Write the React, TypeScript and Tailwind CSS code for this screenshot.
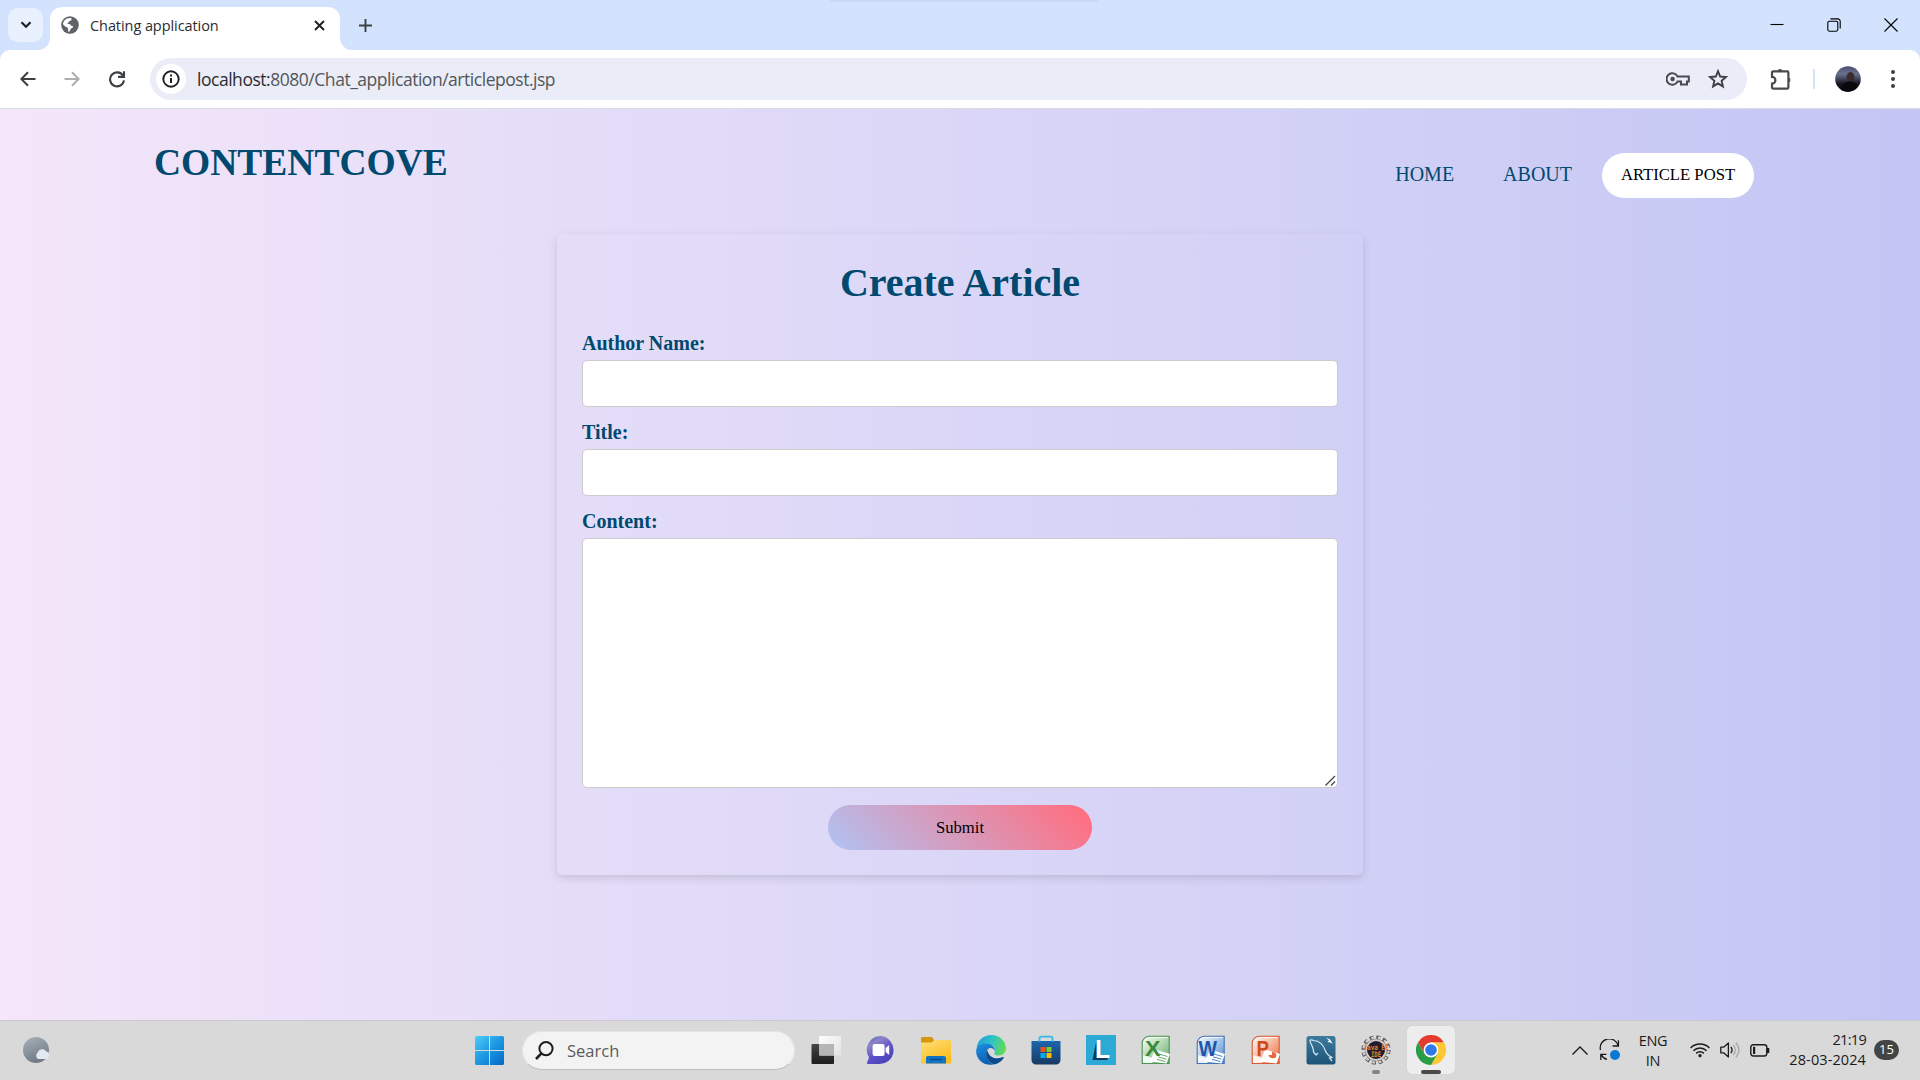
import React from "react";

const SEGOE = "font-['Open_Sans','Noto_Sans',sans-serif]";

function GlobeIcon() {
  return (
    <svg width="18" height="18" viewBox="0 0 18 18" className="shrink-0">
      <circle cx="9" cy="9" r="8.8" fill="#5f6368" />
      <path d="M2 8.2C2 4.8 5 2 8.6 1.9L10.6 2.3C10.8 4.6 9.6 5.2 7.9 5.4C7.6 6.8 6.6 7 5.6 7.4C7.6 7.6 9.6 7.6 9.8 9.6C11.6 9.8 12.4 10.2 12 11.6C10.6 11.8 10.4 13 9.4 13.2C9.2 14.8 8.6 15.6 7.4 16C7 14 7.4 12.6 6.4 11.6C4.8 11 3 9.6 2 8.2Z" fill="#fff" />
    </svg>
  );
}

function TabStrip() {
  return (
    <div className="relative flex h-[50px] items-stretch bg-[#d3e2fd]">
      <div className="absolute top-0 left-[830px] h-[2px] w-[268px] rounded-b bg-[#c9daf8]" />
      <button className="mt-2 ml-2 flex h-[34px] w-[35px] items-center justify-center rounded-[10px] bg-[#e9f1fe]">
        <svg width="12" height="8" viewBox="0 0 12 8" fill="none" stroke="#1f2023" strokeWidth="2.2">
          <path d="M1.5 1.2L6 5.8L10.5 1.2" />
        </svg>
      </button>
      <svg width="12" height="12" viewBox="0 0 12 12" className="-ml-[5px] self-end">
        <path d="M12 0V12H0A12 12 0 0 0 12 0Z" fill="#fff" />
      </svg>
      <div className="mt-[7px] flex w-[290px] items-center rounded-t-[12px] bg-white pr-[15px] pb-[7px] pl-[11px]">
        <GlobeIcon />
        <span className={`mt-px ml-[11px] text-[14.5px] tracking-[-0.07px] whitespace-nowrap text-[#2b2c2f] ${SEGOE}`}>Chating application</span>
        <svg width="11" height="11" viewBox="0 0 11 11" className="ml-auto" stroke="#1f2023" strokeWidth="1.9">
          <path d="M1 1L10 10M10 1L1 10" />
        </svg>
      </div>
      <svg width="12" height="12" viewBox="0 0 12 12" className="self-end">
        <path d="M0 0V12H12A12 12 0 0 1 0 0Z" fill="#fff" />
      </svg>
      <svg width="13" height="13" viewBox="0 0 13 13" className="mt-[18.5px] ml-[7px]" stroke="#3c4043" strokeWidth="1.9">
        <path d="M6.5 0V13M0 6.5H13" />
      </svg>
      <div className="mr-[22px] ml-auto flex items-center gap-[43px] text-black">
        <svg width="14" height="14" viewBox="0 0 14 14" stroke="currentColor" strokeWidth="1.1">
          <path d="M0.5 6.5H13.5" />
        </svg>
        <svg width="14" height="14" viewBox="0 0 14 14" fill="none" stroke="currentColor" strokeWidth="1.1">
          <rect x="0.8" y="3.2" width="10" height="10" rx="1.6" />
          <path d="M3.4 0.9H10.8A2.4 2.4 0 0 1 13.2 3.3V10.6" />
        </svg>
        <svg width="14" height="14" viewBox="0 0 14 14" stroke="currentColor" strokeWidth="1.1">
          <path d="M0.5 0.5L13.5 13.5M13.5 0.5L0.5 13.5" />
        </svg>
      </div>
    </div>
  );
}

function Toolbar() {
  return (
    <div className="bg-[#d3e2fd]">
      <div className="flex h-[59px] items-center rounded-t-[10px] border-b border-[#d9dce6] bg-white">
        <svg width="16" height="16" viewBox="0 0 16 16" className="ml-5" fill="none" stroke="#3c4043" strokeWidth="2">
          <path d="M15.5 8H1.5M8 1.2L1.4 8L8 14.8" />
        </svg>
        <svg width="16" height="16" viewBox="0 0 16 16" className="ml-[28px]" fill="none" stroke="#adafb1" strokeWidth="2">
          <path d="M0.5 8H14.5M8 1.2L14.6 8L8 14.8" />
        </svg>
        <svg width="18" height="18" viewBox="0 0 18 18" className="ml-[28px]" fill="none" stroke="#3c4043" strokeWidth="2.1">
          <path d="M15 5.6A7 7 0 1 0 16 10.4" />
          <path d="M16 1.2V6.9H10" />
        </svg>
        <div className="ml-[24px] flex h-[42px] w-[1597px] items-center rounded-full bg-[#eaedf7] pr-[19px] pl-[6px]">
          <div className="flex size-[30px] items-center justify-center rounded-full bg-white">
            <svg width="18" height="18" viewBox="0 0 18 18" fill="none" stroke="#1f2023">
              <circle cx="9" cy="9" r="7.7" strokeWidth="1.9" />
              <path d="M9 8V13" strokeWidth="2" />
              <path d="M9 4.6V6.5" strokeWidth="2" />
            </svg>
          </div>
          <span className={`ml-[11px] text-[17.5px] tracking-[-0.47px] whitespace-nowrap text-[#53565a] ${SEGOE}`}>
            <span className="text-[#2b2c2f]">localhost:</span>8080/Chat_application/articlepost.jsp
          </span>
          <svg width="24" height="14" viewBox="0 0 24 14" className="ml-auto" fill="none" stroke="#474a4e" strokeWidth="2">
            <path d="M11.6 4.6A5.8 5.8 0 1 0 11.6 9.4H15V12.4H21V9.4H22.8V4.6Z" />
            <circle cx="6.6" cy="7" r="2.2" fill="#474a4e" stroke="none" />
          </svg>
          <svg width="20" height="20" viewBox="0 0 20 20" className="ml-[18px]" fill="none" stroke="#3c4043" strokeWidth="1.9">
            <path d="M10 2.2L12.2 7.5L17.9 8L13.6 11.8L14.9 17.4L10 14.4L5.1 17.4L6.4 11.8L2.1 8L7.8 7.5Z" />
          </svg>
        </div>
        <svg width="22" height="22" viewBox="0 0 22 22" className="ml-[23px]" fill="none" stroke="#474a4e" strokeWidth="2.2">
          <path d="M2 4.4A1 1 0 0 1 3 3.4H17.4A1 1 0 0 1 18.4 4.4V19.6A1 1 0 0 1 17.4 20.6H3A1 1 0 0 1 2 19.6V15.6A3.2 3.2 0 0 0 2 8.8Z" />
          <path d="M7.6 3A2.6 2.6 0 0 1 12.6 3ZM18.6 9.4A2.6 2.6 0 0 1 18.6 14.4Z" fill="#474a4e" stroke="none" />
        </svg>
        <div className="ml-[21px] h-5 w-[2px] bg-[#d3e2fd]" />
        <svg width="26" height="26" viewBox="0 0 26 26" className="ml-[20px]">
          <defs>
            <linearGradient id="sky" x1="0" y1="0" x2="0" y2="1">
              <stop offset="0" stopColor="#4a5270" />
              <stop offset="0.3" stopColor="#69718f" />
              <stop offset="0.55" stopColor="#34384a" />
              <stop offset="0.7" stopColor="#12141a" />
              <stop offset="1" stopColor="#0b0c10" />
            </linearGradient>
          </defs>
          <circle cx="13" cy="13" r="12.8" fill="url(#sky)" />
          <ellipse cx="15.5" cy="11.5" rx="4" ry="5.5" fill="#3b2a2e" />
          <path d="M6 24C8 17 11 15.5 15.5 15.5C20 15.5 22 18 22.5 21A12.8 12.8 0 0 1 6 24Z" fill="#08090c" />
        </svg>
        <svg width="4" height="20" viewBox="0 0 4 20" className="ml-[30px]" fill="#3c4043">
          <circle cx="2" cy="3" r="2" />
          <circle cx="2" cy="10" r="2" />
          <circle cx="2" cy="17" r="2" />
        </svg>
      </div>
    </div>
  );
}

function Field({ label, children }: { label: string; children: React.ReactNode }) {
  return (
    <label className="block">
      <span className="block h-[24px] text-[20px] leading-[24px] font-bold">{label}</span>
      {children}
    </label>
  );
}

function Page() {
  return (
    <main className="h-[911px] bg-[linear-gradient(90deg,#f5e6fa,#e3dcf8_33%,#c3c6f4)] font-['Liberation_Serif',serif] text-[#00496f]">
      <header className="flex h-[125px] items-start justify-between pr-[166px] pl-[154px]">
        <h1 className="mt-[32px] text-[37.5px] leading-[44px] font-bold">CONTENTCOVE</h1>
        <nav className="mt-[44px] flex h-[45px] items-center text-[20px] leading-[24px]">
          <a className="mb-[4px]">HOME</a>
          <a className="mb-[4px] ml-[49px]">ABOUT</a>
          <a className="ml-[30px] flex h-[45px] w-[152px] items-center justify-center rounded-full bg-white pb-[2px] text-[16.67px] text-black">ARTICLE POST</a>
        </nav>
      </header>
      <form className="mx-auto h-[641px] w-[806px] rounded-[6px] px-[25px] pt-[26px] shadow-[0_3px_8px_rgba(0,0,0,0.13)]">
        <h2 className="text-center text-[40px] leading-[46px] font-bold">Create Article</h2>
        <div className="mt-[25px] flex flex-col gap-[13px]">
          <Field label="Author Name:">
            <input className="mt-[5px] block h-[47px] w-full rounded-[5px] border border-[#ccc] bg-white" />
          </Field>
          <Field label="Title:">
            <input className="mt-[5px] block h-[47px] w-full rounded-[5px] border border-[#ccc] bg-white" />
          </Field>
          <Field label="Content:">
            <span className="relative mt-[5px] block">
              <textarea className="block h-[250px] w-full resize-none rounded-[5px] border border-[#ccc] bg-white" />
              <svg width="11" height="11" viewBox="0 0 11 11" className="absolute right-[2px] bottom-[2px]" stroke="#444" strokeWidth="1.3">
                <path d="M0.5 10.5L10 1M6 10.5L10 6.5" />
              </svg>
            </span>
          </Field>
        </div>
        <button type="button" className="mx-auto mt-[17px] block h-[45px] w-[264px] rounded-full bg-[linear-gradient(45deg,#b0c3f3,#ff6f81_95%)] text-[16.67px] text-black">Submit</button>
      </form>
    </main>
  );
}

function OfficeIcon({ letter, id, light, mid, dark, ink }: { letter: string; id: string; light: string; mid: string; dark: string; ink: string }) {
  return (
    <svg width="30" height="30" viewBox="0 0 30 30" className="overflow-visible">
      <defs>
        <linearGradient id={id} x1="0" y1="0" x2="1" y2="1">
          <stop offset="0" stopColor="#f8fbfa" />
          <stop offset="0.4" stopColor={light} />
          <stop offset="1" stopColor={mid} />
        </linearGradient>
      </defs>
      <path d="M8.5 1.2H28.2V28.4H1.2V8.5C1.2 4.5 4.5 1.2 8.5 1.2Z" fill={`url(#${id})`} stroke={dark} strokeWidth="1.1" />
      <path d="M2.5 9C2.5 5 5 2.6 9 2.6H26.8" fill="none" stroke="#fff" strokeOpacity="0.8" />
      <path d="M2 20L14 24L11 28H2Z" fill="#fff" fillOpacity="0.85" />
      <path d="M14 14.5L29 19L25.5 28.6L9 26.5Z" fill="#fff" />
      {letter === "P" ? (
        <path d="M21 17A4 3 15 1 1 17.5 20L21 20Z" fill={mid} />
      ) : (
        <path d="M18 19L26.5 21.5M17 21.8L25.5 24.2M16 24.4L24.5 26.6" stroke={mid} strokeWidth="1" />
      )}
      <text x="11.8" y="20.5" textAnchor="middle" fontFamily="Liberation Sans, sans-serif" fontWeight="bold" fontSize="21.5" textLength={letter === "W" ? 18.5 : letter === "X" ? 15.5 : 12.5} lengthAdjust="spacingAndGlyphs" fill={ink}>{letter}</text>
    </svg>
  );
}

function Cell({ children }: { children: React.ReactNode }) {
  return <div className="flex h-[48px] w-[55px] items-center justify-center">{children}</div>;
}

function TaskIcons() {
  return (
    <>
      <Cell>
        <svg width="30" height="30" viewBox="0 0 30 30">
          <defs>
            <linearGradient id="tvd" x1="0" y1="0" x2="0" y2="1"><stop stopColor="#444" /><stop offset="1" stopColor="#1d1d1d" /></linearGradient>
            <linearGradient id="tvl" x1="0" y1="0" x2="1" y2="1"><stop stopColor="#fdfdfd" /><stop offset="1" stopColor="#e2e2e2" /></linearGradient>
          </defs>
          <rect x="0.5" y="9" width="22.5" height="20" rx="1" fill="url(#tvd)" />
          <rect x="8" y="1" width="22" height="19.5" rx="1" fill="url(#tvl)" />
          <path d="M8 9H23V20.5H9A1 1 0 0 1 8 19.5Z" fill="#b5b5b5" />
        </svg>
      </Cell>
      <Cell>
        <svg width="30" height="30" viewBox="0 0 30 30">
          <defs><linearGradient id="chat" x1="0" y1="0" x2="0.6" y2="1"><stop stopColor="#4a55c4" /><stop offset="0.3" stopColor="#8c84c6" /><stop offset="0.65" stopColor="#5d52cb" /><stop offset="1" stopColor="#4a41b8" /></linearGradient></defs>
          <path d="M15 1A14 14 0 1 1 12 29H2.2C1 29 0.7 28.2 1.2 27.2L3 22.5A14 14 0 0 1 15 1Z" fill="url(#chat)" />
          <rect x="6.6" y="9" width="12" height="12" rx="2" fill="#fff" />
          <path d="M19.6 13L23.2 10V20L19.6 17Z" fill="#fff" />
        </svg>
      </Cell>
      <Cell>
        <svg width="30" height="30" viewBox="0 0 30 30">
          <defs><linearGradient id="fold" x1="0" y1="0" x2="0.6" y2="1"><stop stopColor="#ffe07a" /><stop offset="1" stopColor="#fbbc1d" /></linearGradient></defs>
          <path d="M0 3A1 1 0 0 1 1 2H11L13 5V9H0Z" fill="#d8960f" />
          <path d="M0 7.5H10.5L13.5 5H29A1 1 0 0 1 30 6V28.5H0Z" fill="url(#fold)" />
          <path d="M5 28.5V23A2 2 0 0 1 7 21H23A2 2 0 0 1 25 23V28.5Z" fill="#1272c4" />
          <path d="M9 24.5H21" stroke="#0b4f91" strokeWidth="1.6" />
        </svg>
      </Cell>
      <Cell>
        <svg width="30" height="30" viewBox="0 0 30 30">
          <defs>
            <linearGradient id="edg" x1="0" y1="0.3" x2="1" y2="0.5"><stop stopColor="#1ba0d8" /><stop offset="0.5" stopColor="#2fc3c8" /><stop offset="1" stopColor="#62dd4e" /></linearGradient>
            <linearGradient id="edb" x1="0" y1="0" x2="0.4" y2="1"><stop stopColor="#1b8fe0" /><stop offset="1" stopColor="#0f60b4" /></linearGradient>
          </defs>
          <path d="M0.6 13C1.5 5 8 0 15.2 0C23.5 0 30 6 30 13.3C30 18 26.5 20.5 22.5 20.5C19 20.5 17.6 19 18.6 17.4C20.5 14.5 18 10 13 9C7.5 8 3 10 0.6 13Z" fill="url(#edg)" />
          <path d="M0.2 15C1 10.5 5.5 8.2 11 8.6C16.4 9 19.3 13 18.8 16.2C17.8 13.6 15 12.4 12.8 13.4C9 15.5 8.6 25 17.5 29.5C7.5 31.6 -0.6 24 0.2 15Z" fill="url(#edb)" />
          <path d="M11.2 15C8 20.5 12 27.4 18 29.4C22 28.8 25.5 26.5 27.7 23C28 22.2 27.6 21.8 26.9 22.1C18.5 25.6 12.5 21.2 11.2 15Z" fill="#0e4b8d" />
        </svg>
      </Cell>
      <Cell>
        <svg width="30" height="30" viewBox="0 0 30 30">
          <defs><linearGradient id="store" x1="0" y1="0" x2="0" y2="1"><stop stopColor="#1b66ad" /><stop offset="1" stopColor="#183a63" /></linearGradient></defs>
          <path d="M8.5 8V3.5A1.8 1.8 0 0 1 10.3 1.7H19.7A1.8 1.8 0 0 1 21.5 3.5V8" fill="none" stroke="#38b8ea" strokeWidth="1.8" />
          <path d="M0.5 6H29.5V25A4.5 4.5 0 0 1 25 29.5H5A4.5 4.5 0 0 1 0.5 25Z" fill="url(#store)" />
          <path d="M8.5 5.5V6.8M21.5 5.5V6.8" stroke="#38b8ea" strokeWidth="1.8" />
          <rect x="9.5" y="12" width="5" height="5" fill="#f1511b" />
          <rect x="15.5" y="12" width="5" height="5" fill="#80cc28" />
          <rect x="9.5" y="18" width="5" height="5" fill="#00adef" />
          <rect x="15.5" y="18" width="5" height="5" fill="#fbbc09" />
        </svg>
      </Cell>
      <Cell>
        <svg width="30" height="30" viewBox="0 0 30 30">
          <rect width="30" height="30" fill="#2aaad4" />
          <path d="M10.5 5L6.5 25L21 25L23 22L11.5 20Z" fill="#123a5c" />
          <text x="9" y="23" fontFamily="Liberation Sans, sans-serif" fontWeight="bold" fontSize="25" textLength="15" lengthAdjust="spacingAndGlyphs" fill="#fff">L</text>
        </svg>
      </Cell>
      <Cell><OfficeIcon letter="X" id="xl" light="#bfe0bd" mid="#63ab6a" dark="#4b9455" ink="#3b8a3c" /></Cell>
      <Cell><OfficeIcon letter="W" id="wd" light="#b9d2ee" mid="#4c86cf" dark="#4474b8" ink="#1d55a8" /></Cell>
      <Cell><OfficeIcon letter="P" id="pp" light="#f9c6ab" mid="#e8673a" dark="#d95a33" ink="#cf4a18" /></Cell>
      <Cell>
        <svg width="30" height="30" viewBox="0 0 30 30" fill="none">
          <defs><linearGradient id="sql" x1="0" y1="0" x2="0" y2="1"><stop stopColor="#3d7c9f" /><stop offset="1" stopColor="#1d5478" /></linearGradient></defs>
          <rect x="0.5" y="1" width="29" height="28.5" rx="2.5" fill="url(#sql)" />
          <path d="M10 20L7.5 17C8 13 4.5 9 4 6C3.8 4.5 6 4.6 7.5 5.5C13 5.8 17.5 10 19.5 16C20.3 18.5 22.5 20.5 26 22.5L23.5 23L26 26M10 20L12 18" stroke="#d6e5ee" strokeWidth="1.2" />
          <path d="M20 2.5L24 4.5L27 9L24.5 7.5L21.5 7L23 5.5Z" fill="#fff" />
        </svg>
      </Cell>
      <Cell>
        <div className="relative flex h-full w-full items-center justify-center">
          <svg width="30" height="30" viewBox="0 0 30 30" className="overflow-visible">
            <circle cx="15" cy="15" r="12.8" fill="none" stroke="#5a5654" strokeWidth="3.6" strokeDasharray="3.9 2.8" />
            <circle cx="15" cy="15" r="12.6" fill="none" stroke="#d6d4d2" strokeWidth="2.2" strokeDasharray="2.5 4.2" strokeDashoffset="-0.7" />
            <circle cx="15" cy="15" r="11" fill="#d2cfcd" stroke="#8a8684" strokeWidth="0.7" />
            <circle cx="15" cy="15" r="9" fill="#211d2f" />
            <text x="15" y="15" textAnchor="middle" fontFamily="DejaVu Sans Mono, monospace" fontWeight="bold" fontSize="7.4" textLength="25" lengthAdjust="spacingAndGlyphs" fill="#e8842c">Java EE</text>
            <text x="15" y="21.6" textAnchor="middle" fontFamily="DejaVu Sans Mono, monospace" fontWeight="bold" fontSize="7.4" textLength="10" lengthAdjust="spacingAndGlyphs" fill="#e8842c">IDE</text>
          </svg>
          <div className="absolute bottom-0 h-1 w-2 rounded-full bg-[#858585]" />
        </div>
      </Cell>
      <div className="relative ml-[4px] flex size-[48px] items-center justify-center rounded-[5px] bg-[#ededed] shadow-[0_0_1px_rgba(0,0,0,0.15)]">
        <svg width="30" height="30" viewBox="-15 -15 30 30">
          <path d="M-13 -7.5A15 15 0 0 1 13 -7.5H0L-6.5 3.75Z" fill="#e33b2e" />
          <path d="M13 -7.5A15 15 0 0 1 0 15L6.5 3.75L0 -7.5Z" fill="#fcc934" />
          <path d="M0 15A15 15 0 0 1 -13 -7.5L-6.5 3.75H6.5Z" fill="#2a9c48" />
          <circle r="7.4" fill="#fff" />
          <circle r="5.8" fill="#2f78ea" />
        </svg>
        <div className="absolute bottom-0 h-1 w-5 rounded-full bg-[#4a4a4a]" />
      </div>
    </>
  );
}

function Taskbar() {
  return (
    <footer className={`flex h-[60px] items-center bg-[#d9d9d9] shadow-[inset_0_1px_0_#cbc8d2] ${SEGOE}`}>
      <svg width="28" height="28" viewBox="0 0 28 28" className="ml-[22px]">
        <defs>
          <linearGradient id="moon" x1="0" y1="0" x2="0.4" y2="1"><stop stopColor="#a9b2ba" /><stop offset="1" stopColor="#717b85" /></linearGradient>
        </defs>
        <circle cx="14" cy="14" r="13" fill="url(#moon)" />
        <path d="M16 23A4 4 0 0 1 15.6 16.6A5 5 0 0 1 24.4 15.4A3.9 3.9 0 0 1 24 23Z" fill="#e3e9ef" />
      </svg>
      <svg width="29" height="29" viewBox="0 0 29 29" className="ml-[425px]">
        <defs>
          <linearGradient id="win" x1="0" y1="0" x2="1" y2="1"><stop stopColor="#4fcdf9" /><stop offset="0.5" stopColor="#1c98e2" /><stop offset="1" stopColor="#0367c5" /></linearGradient>
        </defs>
        <path d="M1.5 0H14V14H0V1.5A1.5 1.5 0 0 1 1.5 0ZM15 0H27.5A1.5 1.5 0 0 1 29 1.5V14H15ZM0 15H14V29H1.5A1.5 1.5 0 0 1 0 27.5ZM15 15H29V27.5A1.5 1.5 0 0 1 27.5 29H15Z" fill="url(#win)" />
      </svg>
      <div className="ml-[18px] flex h-[39px] w-[273px] items-center rounded-full border border-[#e4e4e4] border-b-[#bdbdbd] bg-[#f3f3f3] pl-[12px]">
        <svg width="19" height="19" viewBox="0 0 19 19" fill="none" stroke="#1e1e1e" strokeWidth="2">
          <circle cx="11" cy="7.6" r="6.6" />
          <path d="M6.4 12.4L1 18" strokeWidth="2.6" />
        </svg>
        <span className="mt-[2px] ml-[13px] text-[16.5px] text-[#5a5a5a]">Search</span>
      </div>
      <div className="ml-[3px] flex items-center">
        <TaskIcons />
      </div>
      <div className="ml-auto flex items-center text-[#1b1b1b]">
        <svg width="16" height="9" viewBox="0 0 16 9" fill="none" stroke="currentColor" strokeWidth="1.4"><path d="M0.5 8.5L8 1L15.5 8.5" /></svg>
        <svg width="22" height="22" viewBox="0 0 22 22" className="ml-[11px]" fill="none" stroke="currentColor" strokeWidth="1.3">
          <path d="M1.5 11A9 9 0 0 1 19 6.6M19.4 1.2V7H13.6M1.8 21V15.4H7.4M2.2 15.6A9 9 0 0 0 8 20.4" />
          <circle cx="16" cy="16" r="5" fill="#0b78d6" stroke="none" />
        </svg>
        <div className="mt-px ml-[17px] w-[30px] text-center text-[14.5px] leading-[20px] tracking-[-0.3px]">
          <div>ENG</div>
          <div>IN</div>
        </div>
        <svg width="20" height="16" viewBox="0 0 20 16" className="ml-[22px]" fill="none" stroke="currentColor" strokeWidth="1.5">
          <path d="M0.6 6A13.2 13.2 0 0 1 19.4 6M3.4 8.8A9.3 9.3 0 0 1 16.6 8.8M6.2 11.4A5.4 5.4 0 0 1 13.8 11.4" />
          <circle cx="10" cy="13.7" r="1.6" fill="currentColor" stroke="none" />
        </svg>
        <svg width="20" height="18" viewBox="0 0 20 18" className="ml-[10px]" fill="none" stroke="currentColor" strokeWidth="1.3">
          <path d="M0.8 6.2H3.6L8.4 2V16L3.6 11.8H0.8Z" strokeLinejoin="round" />
          <path d="M10.8 6A4.2 4.2 0 0 1 10.8 12" />
          <path d="M13.2 4A7 7 0 0 1 13.2 14M15.8 1.8A10 10 0 0 1 15.8 16.2" stroke="#a9a9a9" />
        </svg>
        <svg width="20" height="13" viewBox="0 0 20 13" className="ml-[10px]" fill="none" stroke="currentColor" strokeWidth="1.4">
          <rect x="0.8" y="0.8" width="16" height="11.2" rx="2.4" />
          <path d="M18 4V9" strokeWidth="2.6" />
          <rect x="3" y="2.8" width="2.2" height="7.2" fill="currentColor" stroke="none" />
        </svg>
        <div className="mb-px ml-[16px] w-[80px] text-right text-[14.5px] leading-[20px] whitespace-nowrap">
          <div className="tracking-[-0.7px]">21:19</div>
          <div className="tracking-[0.1px]">28-03-2024</div>
        </div>
        <div className="mr-[21px] ml-[8px] flex h-[20px] w-[25px] items-center justify-center rounded-full bg-[#444] text-[13px] text-white">15</div>
      </div>
    </footer>
  );
}

export default function App() {
  return (
    <div className="flex h-[1080px] w-[1920px] flex-col overflow-hidden">
      <TabStrip />
      <Toolbar />
      <Page />
      <Taskbar />
    </div>
  );
}
